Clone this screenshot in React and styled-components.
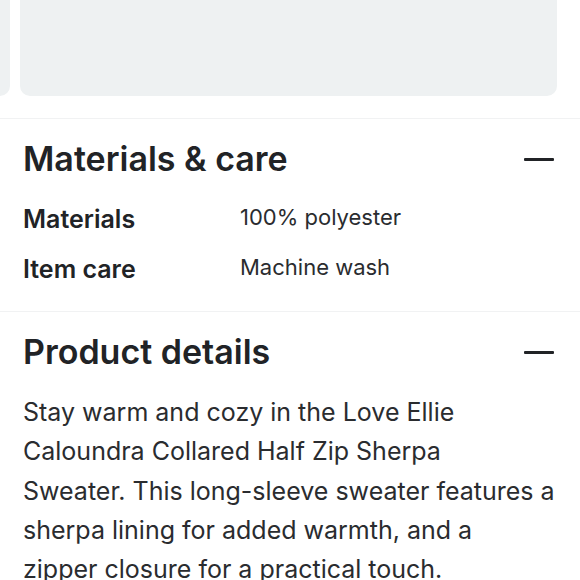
import React from "react";
import styled, { createGlobalStyle } from "styled-components";

const Global = createGlobalStyle`
  html, body { margin: 0; padding: 0; background: #ffffff; }
  body { font-family: Inter, "Noto Sans", sans-serif; color: #212326; -webkit-font-smoothing: antialiased; }
`;

const Page = styled.div`
  width: 580px;
  height: 580px;
  overflow: hidden;
`;

const Carousel = styled.div`
  height: 96px;
  overflow: hidden;
  display: flex;
  align-items: flex-end;
  gap: 10px;
  margin-left: -527px;
`;

const Slide = styled.div`
  flex: 0 0 537px;
  height: 300px;
  border-radius: 10px;
  background: #eef1f2;
`;

const Section = styled.section`
  border-top: 1px solid #f1f2f3;
  margin-top: ${(p) => p.$gap || 0}px;
  padding: 20px 16px 0 23px;
`;

const Header = styled.div`
  display: flex;
  align-items: center;
  justify-content: space-between;
  height: 40px;
  padding-right: 10px;
`;

const Title = styled.h2`
  margin: 0;
  font-size: 34px;
  line-height: 40px;
  font-weight: 600;
  letter-spacing: 0;
  color: #212326;
`;

const Minus = styled.span`
  display: block;
  width: 30px;
  height: 3px;
  border-radius: 1px;
  background: #212326;
`;

const Specs = styled.dl`
  margin: 24px 0 0;
  display: grid;
  grid-template-columns: 217px 1fr;
  align-items: baseline;
  row-gap: 18px;
  padding-bottom: 26px;
`;

const Term = styled.dt`
  margin: 0;
  font-size: 25px;
  line-height: 32px;
  font-weight: 600;
`;

const Value = styled.dd`
  margin: 0;
  font-size: 22px;
  line-height: 28px;
  font-weight: 400;
  color: #2a2c2f;
  position: relative;
  top: -3px;
`;

const Body = styled.p`
  margin: 21px 0 0;
  font-size: 25px;
  line-height: 39.3px;
  font-weight: 400;
  color: #2a2c2f;
`;

export default function App() {
  return (
    <Page>
      <Global />
      <Carousel>
        <Slide />
        <Slide />
      </Carousel>
      <Section $gap={22}>
        <Header>
          <Title>Materials &amp; care</Title>
          <Minus />
        </Header>
        <Specs>
          <Term>Materials</Term>
          <Value>100% polyester</Value>
          <Term>Item care</Term>
          <Value>Machine wash</Value>
        </Specs>
      </Section>
      <Section>
        <Header>
          <Title>Product details</Title>
          <Minus />
        </Header>
        <Body>
          Stay warm and cozy in the Love Ellie Caloundra Collared Half Zip Sherpa
          <br />
          Sweater. This long-sleeve sweater features a sherpa lining for added
          warmth, and a
          <br />
          zipper closure for a practical touch.
        </Body>
      </Section>
    </Page>
  );
}
